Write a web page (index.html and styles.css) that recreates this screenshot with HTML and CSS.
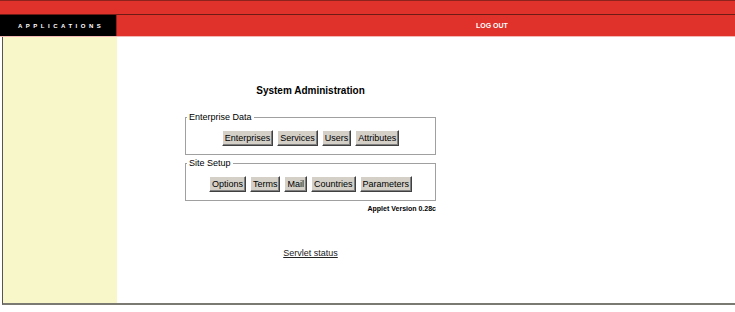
FILE: index.html
```html
<!DOCTYPE html>
<html>
<head>
  <link rel="stylesheet" href="styles.css">
</head>
<body>
  <!-- Top strip -->
  <div class="top-strip"></div>

  <!-- Header -->
  <div class="header">
    <div class="brand">APPLICATIONS</div>
    <div class="header-bar">
      <a class="logout-link" href="#">LOG OUT</a>
    </div>
  </div>

  <!-- Main area -->
  <div class="main">
    <div class="sidebar"></div>
    <div class="content">
      <div class="panel">
        <h1 class="panel-title">System Administration</h1>

        <fieldset class="group">
          <legend>Enterprise Data</legend>
          <div class="button-row">
            <button class="admin-button">Enterprises</button>
            <button class="admin-button">Services</button>
            <button class="admin-button">Users</button>
            <button class="admin-button">Attributes</button>
          </div>
        </fieldset>

        <fieldset class="group">
          <legend>Site Setup</legend>
          <div class="button-row">
            <button class="admin-button">Options</button>
            <button class="admin-button">Terms</button>
            <button class="admin-button">Mail</button>
            <button class="admin-button">Countries</button>
            <button class="admin-button">Parameters</button>
          </div>
        </fieldset>

        <div class="version">Applet Version 0.28c</div>

        <div class="status-row">
          <a class="status-link" href="#">Servlet status</a>
        </div>
      </div>
    </div>
  </div>
</body>
</html>
```

FILE: styles.css
```css
* {
  margin: 0;
  padding: 0;
  box-sizing: border-box;
  font-family: 'Liberation Sans', Arial, sans-serif;
}

body {
  width: 735px;
  height: 312px;
  background: #ffffff;
  overflow: hidden;
}

.top-strip {
  height: 15px;
  background: #e0312a;
  border-top: 1px solid #8e231d;
  border-bottom: 1px solid #6e1a15;
}

.header {
  display: flex;
  height: 22px;
  border-bottom: 1px solid #f3b8b4;
}

.brand {
  width: 116px;
  background: #000000;
  color: #ffffff;
  font-size: 6px;
  font-weight: bold;
  letter-spacing: 3.5px;
  padding-left: 18px;
  display: flex;
  align-items: center;
}

.header-bar {
  flex: 1;
  background: #e0312a;
  border-left: 1px solid #8e231d;
  display: flex;
  align-items: center;
  padding-left: 359px;
}

.logout-link {
  color: #ffffff;
  font-size: 7px;
  font-weight: bold;
  text-decoration: none;
}

/* Main area */
.main {
  display: flex;
  height: 268px;
  margin-left: 2px;
  border-left: 1px solid #555555;
  border-bottom: 2px solid #7a7a72;
}

.sidebar {
  width: 114px;
  background: #f8f7c9;
}

.content {
  flex: 1;
  padding: 48px 0 0 68px;
}

.panel {
  width: 251px;
}

.panel-title {
  font-size: 10px;
  font-weight: bold;
  color: #000000;
  text-align: center;
  line-height: 12px;
  margin-bottom: 15px;
}

.group {
  border: 1px solid #a0a0a0;
  padding: 7px 0 8px;
  margin-bottom: 3px;
}

.group legend {
  font-size: 9px;
  line-height: 11px;
  color: #000000;
  margin-left: 1px;
  padding: 0 2px;
}

.button-row {
  display: flex;
  justify-content: center;
  gap: 4px;
}

.admin-button {
  height: 16px;
  padding: 0 2px;
  font-size: 9px;
  color: #000000;
  background: #d4d0c8;
  border: 1px solid;
  border-color: #ffffff #404040 #404040 #ffffff;
  box-shadow: inset -1px -1px 0 #808080;
  cursor: pointer;
}

.version {
  font-size: 7px;
  font-weight: bold;
  text-align: right;
  margin-top: 1px;
  line-height: 10px;
}

.status-row {
  text-align: center;
  margin-top: 28px;
}

.status-link {
  font-size: 9px;
  color: #222222;
  text-decoration: underline;
}
```
